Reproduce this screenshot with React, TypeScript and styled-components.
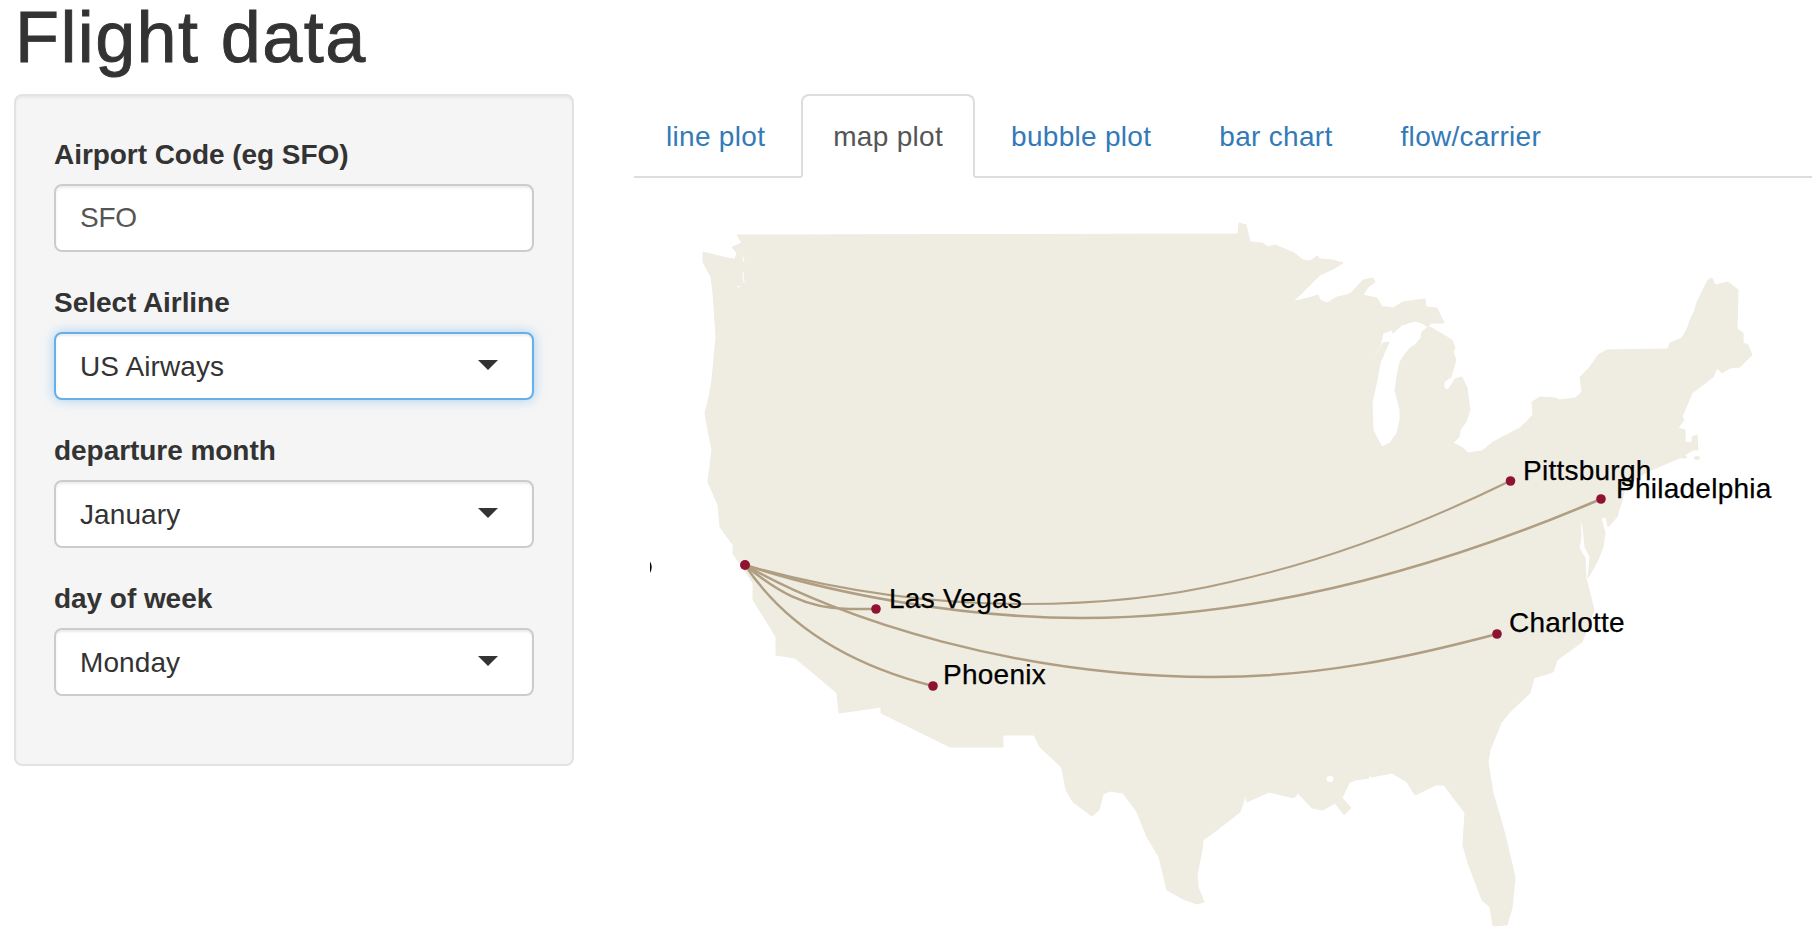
import React from "react";
import styled, { createGlobalStyle } from "styled-components";

const GlobalStyle = createGlobalStyle`
  html, body {
    margin: 0;
    padding: 0;
    background: #fff;
    overflow: hidden;
  }
  body {
    font-family: "Liberation Sans", Arial, sans-serif;
    font-size: 28px;
    color: #333;
  }
`;

const Page = styled.div`
  width: 1812px;
  height: 952px;
  padding-left: 14px;
  box-sizing: border-box;
  overflow: hidden;
`;

const Title = styled.h1`
  margin: 0 0 21px 1px;
  padding-top: 1px;
  font-size: 72px;
  line-height: 72px;
  font-weight: 400;
  letter-spacing: 1.4px;
  color: #333;
  -webkit-text-stroke: 0.9px #333;
`;

const Columns = styled.div`
  display: grid;
  grid-template-columns: 560px 1fr;
  column-gap: 60px;
  align-items: start;
`;

const Sidebar = styled.div`
  box-sizing: border-box;
  padding: 38px;
  background: #f5f5f5;
  border: 2px solid #e3e3e3;
  border-radius: 8px;
  box-shadow: inset 0 2px 2px rgba(0, 0, 0, 0.05);
`;

const Field = styled.div`
  margin-bottom: 30px;
`;

const Label = styled.label`
  display: block;
  margin-bottom: 8px;
  font-weight: 700;
  line-height: 42px;
  letter-spacing: -0.05px;
`;

const TextInput = styled.input`
  display: block;
  box-sizing: border-box;
  width: 100%;
  height: 68px;
  padding: 0 24px;
  font: inherit;
  letter-spacing: -0.3px;
  color: #555;
  background: #fff;
  border: 2px solid #ccc;
  border-radius: 8px;
  box-shadow: inset 0 2px 2px rgba(0, 0, 0, 0.075);
  outline: none;
`;

const SelectBox = styled.div<{ $focused?: boolean }>`
  display: flex;
  align-items: center;
  justify-content: space-between;
  box-sizing: border-box;
  height: 68px;
  padding: 2px 34px 0 24px;
  letter-spacing: 0.1px;
  color: #333;
  background: #fff;
  border: 2px solid ${(p) => (p.$focused ? "#66afe9" : "#ccc")};
  border-radius: 8px;
  box-shadow: ${(p) =>
    p.$focused
      ? "inset 0 2px 2px rgba(0,0,0,.075), 0 0 12px rgba(102,175,233,.55)"
      : "inset 0 2px 2px rgba(0,0,0,.075)"};
`;

const Caret = styled.span`
  width: 0;
  height: 0;
  margin-bottom: 4px;
  border-style: solid;
  border-width: 10px 10px 0;
  border-color: #333 transparent transparent;
`;

const Main = styled.div`
  min-width: 0;
`;

const Tabs = styled.ul`
  display: flex;
  margin: 0;
  padding: 0;
  list-style: none;
  border-bottom: 2px solid #ddd;
`;

const Tab = styled.li<{ $active?: boolean }>`
  box-sizing: border-box;
  margin-right: 4px;
  margin-bottom: -2px;
  padding: 21px 30px 19px;
  line-height: 40px;
  letter-spacing: 0.3px;
  color: ${(p) => (p.$active ? "#555" : "#337ab7")};
  background: ${(p) => (p.$active ? "#fff" : "transparent")};
  border: 2px solid ${(p) => (p.$active ? "#ddd" : "transparent")};
  border-bottom-color: ${(p) => (p.$active ? "#fff" : "transparent")};
  border-radius: 8px 8px 0 0;
`;

const MapSvg = styled.svg`
  display: block;
`;

const CityLabel = styled.text`
  font-family: "Liberation Sans", Arial, sans-serif;
  font-size: 28px;
  letter-spacing: 0.25px;
  fill: #000;
  stroke: #000;
  stroke-width: 0.25px;
`;

const tabs = ["line plot", "map plot", "bubble plot", "bar chart", "flow/carrier"];

const fields = [
  { label: "Select Airline", value: "US Airways", focused: true },
  { label: "departure month", value: "January" },
  { label: "day of week", value: "Monday" },
];

// outline traced in page coordinates, clockwise from the north west corner
const LAND = `M737 235 L1238 234 L1239 223 L1246 225 L1250 242 L1262 243 L1268 247 L1275 245 L1287 250 L1294 253
L1303 260 L1310 261 L1317 256 L1320 259 L1333 260 L1343 263 L1333 269 L1320 275 L1313 282 L1300 295 L1293 301
L1300 300 L1312 297 L1318 295 L1320 300 L1327 303 L1337 297 L1347 295 L1352 292 L1363 280 L1373 278 L1375 282 L1368 287 L1363 295
L1377 298 L1382 307 L1387 307 L1393 308 L1403 302 L1417 300 L1425 299 L1426 307 L1437 308 L1444 323 L1431 323 L1428 327
L1422 323 L1415 321 L1402 325 L1393 333 L1392 330 L1383 333 L1380 346 L1371 361 L1378 352 L1383 343 L1389 342 L1380 363 L1377 380
L1372 403 L1373 430 L1377 438 L1382 447 L1390 443 L1397 433 L1400 420 L1400 410 L1395 390 L1397 377 L1400 362 L1403 357 L1410 348
L1415 345 L1421 338 L1422 332 L1428 327 L1432 328 L1452 340 L1455 348 L1453 352 L1456 360 L1451 377 L1444 382 L1444 388 L1448 390
L1455 379 L1462 377 L1467 388 L1470 410 L1466 422 L1460 430 L1459 437 L1453 443 L1463 448 L1468 453 L1482 451 L1493 442 L1520 428 L1533 415
L1532 402 L1540 397 L1555 398 L1560 400 L1575 398 L1582 392 L1580 377 L1590 367 L1598 355 L1607 350 L1668 349 L1670 343 L1682 338
L1688 327 L1690 320 L1695 310 L1697 302 L1708 280 L1712 278 L1715 285 L1728 282 L1738 290 L1737 329 L1743 333 L1743 343 L1748 345
L1752 355 L1740 367 L1730 368 L1722 373 L1717 368 L1713 377 L1700 387 L1692 393 L1682 417 L1684 420 L1678 428 L1685 430 L1685 442
L1692 443 L1692 437 L1697 435 L1698 450 L1693 450 L1682 457 L1663 465 L1647 472 L1625 485 L1623 497 L1617 517 L1608 527 L1606 517
L1601 518 L1605 533 L1603 547 L1598 560 L1588 578 L1590 557 L1585 547 L1583 527 L1580 517 L1581 537 L1579 548 L1585 558 L1586 578 L1589 590 L1594 610
L1584 637 L1582 642 L1557 660 L1553 672 L1534 678 L1530 693 L1509 713 L1501 723 L1490 750 L1488 762 L1493 793 L1501 820 L1507 843
L1515 877 L1512 908 L1507 925 L1493 926 L1490 907 L1482 900 L1468 863 L1463 845 L1465 813 L1444 785 L1436 785 L1415 795 L1407 782
L1392 773 L1371 777 L1370 767 L1369 778 L1355 780 L1349 783 L1342 798 L1351 808 L1344 815 L1335 803 L1323 810 L1312 808 L1298 793
L1294 798 L1269 792 L1247 802 L1245 793 L1244 800 L1240 812 L1217 830 L1203 840 L1202 850 L1197 875 L1198 887 L1204 902 L1197 904
L1183 899 L1167 890 L1159 857 L1147 837 L1137 812 L1123 793 L1110 791 L1103 794 L1099 810 L1092 816 L1073 802 L1066 790 L1062 768
L1040 747 L1034 735 L1003 735 L1003 747 L950 747 L881 713 L881 707 L839 713 L837 693 L818 677 L795 658 L776 655 L776 637 L770 627
L753 600 L753 583 L743 568 L733 554 L733 545 L720 527 L718 505 L708 482 L712 450 L708 430 L705 413 L709 397 L712 380 L716 337 L714 307
L713 292 L711 277 L703 262 L703 252 L727 258 L735 259 L737 253 L732 247 L742 243 Z`;

const routes = [
  { d: "M745 565 C830 589 925 604 1024 604 C1110 604 1180 594 1230 582 C1330 560 1420 525 1510 481", w: 2 },
  { d: "M745 565 C830 593 960 618 1082 618 C1230 618 1400 585 1601 499", w: 2.6 },
  { d: "M745 565 C840 620 1020 677 1212 677 C1320 677 1410 657 1497 634", w: 2.5 },
  { d: "M745 565 C775 590 805 609 850 609 L876 609", w: 2.5 },
  { d: "M745 565 C785 625 850 665 933 686", w: 2.5 },
];

const cities = [
  { name: "Las Vegas", x: 876, y: 609, lx: 889, ly: 608 },
  { name: "Phoenix", x: 933, y: 686, lx: 943, ly: 684 },
  { name: "Pittsburgh", x: 1510.5, y: 481, lx: 1523, ly: 480 },
  { name: "Philadelphia", x: 1601, y: 499, lx: 1616, ly: 498 },
  { name: "Charlotte", x: 1497, y: 634, lx: 1509, ly: 632 },
];

const App = () => (
  <Page>
    <GlobalStyle />
    <Title>Flight data</Title>
    <Columns>
      <Sidebar>
        <Field>
          <Label>Airport Code (eg SFO)</Label>
          <TextInput defaultValue="SFO" />
        </Field>
        {fields.map((f) => (
          <Field key={f.label}>
            <Label>{f.label}</Label>
            <SelectBox $focused={f.focused}>
              {f.value}
              <Caret />
            </SelectBox>
          </Field>
        ))}
      </Sidebar>
      <Main>
        <Tabs>
          {tabs.map((t) => (
            <Tab key={t} $active={t === "map plot"}>
              {t}
            </Tab>
          ))}
        </Tabs>
        <MapSvg width="1178" height="774" viewBox="634 178 1178 774">
          <path d={LAND} fill="#efece2" stroke="#efece2" strokeWidth="1" strokeLinejoin="round" />
          <ellipse cx="1697" cy="458" rx="3" ry="2" fill="#efece2" />
          <ellipse cx="1684" cy="457" rx="3" ry="1.5" fill="#efece2" />
          <ellipse cx="1330" cy="779" rx="3.5" ry="3" fill="#fff" />
          <path d="M743 257 L744 262 M743 272 L744 283 M737 287 L741 286" stroke="#fff" strokeWidth="1" fill="none" />
          <path d="M650 561.5 Q653.5 567 650 573 Z" fill="#000" />
          {routes.map((r) => (
            <path key={r.d} d={r.d} fill="none" stroke="#b09e82" strokeWidth={r.w} />
          ))}
          <circle cx="745" cy="565" r="5" fill="#8f1230" />
          {cities.map((c) => (
            <g key={c.name}>
              <circle cx={c.x} cy={c.y} r="4.8" fill="#8f1230" />
              <CityLabel x={c.lx} y={c.ly}>
                {c.name}
              </CityLabel>
            </g>
          ))}
        </MapSvg>
      </Main>
    </Columns>
  </Page>
);

export default App;
